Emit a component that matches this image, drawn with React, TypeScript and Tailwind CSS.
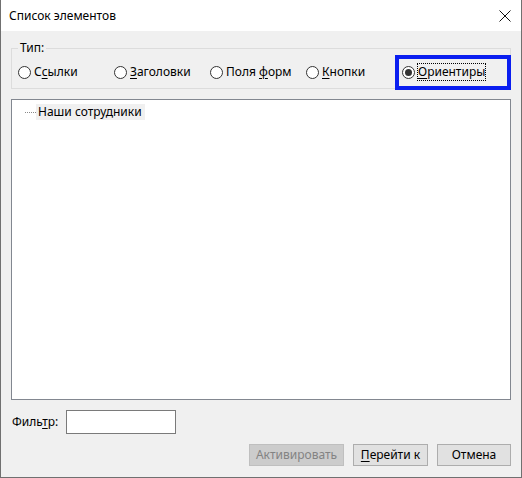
import { useState } from 'react';

type Kind = { id: string; before: string; key: string; after: string };

const kinds: Kind[] = [
  { id: 'links', before: 'С', key: 'с', after: 'ылки' },
  { id: 'headings', before: '', key: 'З', after: 'аголовки' },
  { id: 'fields', before: 'Поля ', key: 'ф', after: 'орм' },
  { id: 'buttons', before: '', key: 'К', after: 'нопки' },
  { id: 'landmarks', before: '', key: 'О', after: 'риентиры' },
];

function Radio({ checked }: { checked: boolean }) {
  return (
    <span className="flex h-[13px] w-[13px] shrink-0 items-center justify-center rounded-full border border-[#333] bg-white">
      {checked && <span className="h-[7px] w-[7px] rounded-full bg-[#333]" />}
    </span>
  );
}

function CloseIcon() {
  return (
    <svg width="12" height="12" viewBox="0 0 12 12" fill="none" stroke="#111" strokeWidth="1">
      <path d="M0.5 0.5L11.5 11.5M11.5 0.5L0.5 11.5" />
    </svg>
  );
}

export default function App() {
  const [kind, setKind] = useState('landmarks');

  return (
    <div className="flex h-[478px] w-[522px] flex-col border-x border-b border-[#707070] bg-[#f0f0f0] font-['Noto_Sans','Segoe_UI',sans-serif] text-[12px] leading-[16px] text-black">
      <div className="flex h-[31px] items-center justify-between bg-white pl-[8px] pr-[10px]">
        <span>Список элементов</span>
        <CloseIcon />
      </div>

      <div className="flex flex-1 flex-col px-[10px] pt-[9px]">
        <div className="relative">
          <fieldset className="border border-[#dcdcdc] pb-0">
            <legend className="ml-[6px] px-[2px]">Тип:</legend>
            <div className="flex h-[32px] items-center pl-[6px]">
              {kinds.map((k) => (
                <label
                  key={k.id}
                  className="flex w-[96px] cursor-default items-center gap-[3px]"
                  onClick={() => setKind(k.id)}
                >
                  <Radio checked={kind === k.id} />
                  <span className={kind === k.id ? 'outline outline-1 outline-dotted outline-black' : ''}>
                    {k.before}
                    <span className="underline underline-offset-2">{k.key}</span>
                    {k.after}
                  </span>
                </label>
              ))}
            </div>
          </fieldset>
          <div className="pointer-events-none absolute left-[384px] top-[15px] h-[35px] w-[116px] border-[4px] border-[#0a1ef0]" />
        </div>

        <div className="mt-[10px] h-[301px] border border-[#828790] bg-white pl-[13px] pt-[4px]">
          <div className="flex items-center">
            <span className="w-[11px] border-t border-dotted border-[#8a8a8a]" />
            <span className="bg-[#f0f0f0] pl-[2px] pr-[3px]">Наши сотрудники</span>
          </div>
        </div>

        <div className="mt-[10px] flex items-center">
          <label className="w-[55px] pl-[1px]">
            Филь<span className="underline underline-offset-2">т</span>р:
          </label>
          <input className="h-[24px] w-[110px] border border-[#7a7a7a] bg-white px-1 outline-none" />
        </div>

        <div className="mt-[10px] flex justify-end gap-[9px]">
          <button
            disabled
            className="h-[22px] w-[95px] border border-[#bfbfbf] bg-[#cccccc] text-[#838383]"
          >
            Активировать
          </button>
          <button className="h-[22px] w-[75px] border border-[#adadad] bg-[#e1e1e1]">
            <span className="underline underline-offset-2">П</span>ерейти к
          </button>
          <button className="h-[22px] w-[74px] border border-[#adadad] bg-[#e1e1e1]">
            Отмена
          </button>
        </div>
      </div>
    </div>
  );
}
